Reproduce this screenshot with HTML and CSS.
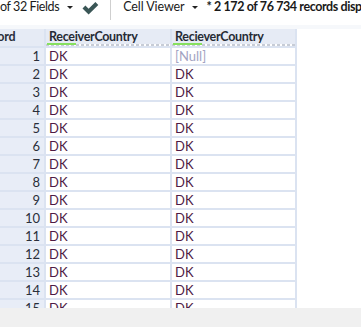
FILE: index.html
```html
<!DOCTYPE html>
<html lang="en">
<head>
    <meta charset="UTF-8">
    <title>Results</title>
    <link rel="stylesheet" href="styles.css">
</head>
<body>
    <div class="toolbar">
        <span class="tb-text fields">of 32 Fields</span>
        <span class="caret"></span>
        <svg class="check" width="17" height="14" viewBox="0 0 17 14">
            <path d="M0.5 7.5 L3.4 4.6 L6.6 7.8 L13.4 1 L16.3 3.9 L6.6 13.6 Z" fill="#3a5656"/>
        </svg>
        <span class="sep"></span>
        <span class="tb-text viewer">Cell Viewer</span>
        <span class="caret"></span>
        <span class="tb-text count">* 2 172 of 76 734 records displayed</span>
    </div>
    <div class="strip"></div>
    <div class="grid">
        <div class="row head">
            <div class="num"><span class="cut">Record</span></div>
            <div class="cell"><span>ReceiverCountry</span></div>
            <div class="cell"><span>RecieverCountry</span></div>
        </div>
    </div>
    <div class="footer"></div>
    <script>
        var grid = document.querySelector(".grid");
        for (var i = 1; i <= 15; i++) {
            var row = document.createElement("div");
            row.className = "row";
            var second = i == 1 ? '<div class="cell null">[Null]</div>' : '<div class="cell">DK</div>';
            row.innerHTML = '<div class="num">' + i + '</div><div class="cell">DK</div>' + second;
            grid.appendChild(row);
        }
    </script>
</body>
</html>
```

FILE: styles.css
```css
body {
    margin: 0;
    width: 361px;
    height: 327px;
    overflow: hidden;
    background: #ffffff;
    font-family: Lato, "Open Sans", sans-serif;
    position: relative;
}
.toolbar {
    height: 25px;
    display: flex;
    align-items: flex-start;
    white-space: nowrap;
    font-size: 12.5px;
    letter-spacing: -0.4px;
    color: #1a1a1a;
    overflow: hidden;
}
.toolbar > * {
    flex-shrink: 0;
}
.tb-text {
    line-height: 16px;
    margin-top: -1px;
}
.viewer {
    letter-spacing: -0.1px;
}
.count {
    font-weight: bold;
    margin-left: 8px;
}
.caret {
    width: 0;
    height: 0;
    border-left: 3px solid transparent;
    border-right: 3px solid transparent;
    border-top: 3px solid #222;
    margin-top: 6px;
    margin-left: 8px;
}
.check {
    margin-left: 9px;
    margin-top: 1px;
}
.sep {
    width: 1px;
    height: 20px;
    background: #cfcfcf;
    margin-left: 11px;
    margin-right: 12px;
}
.strip {
    height: 4px;
    background: #f6f8fb;
}
.grid {
    width: 297px;
    background: #dbe3f1;
    height: 279px;
    overflow: hidden;
}
.row {
    display: flex;
    gap: 2px;
    height: 16px;
    margin-bottom: 2px;
    font-size: 13px;
    line-height: 16px;
}
.num {
    width: 40px;
    padding-right: 4px;
    background: #e8edf7;
    text-align: right;
    color: #2a2f3a;
    overflow: hidden;
    white-space: nowrap;
}
.cell {
    width: 121px;
    padding-left: 3px;
    background: #ffffff;
    color: #4e1a45;
}
.row .cell:last-child {
    width: 120px;
}
.null {
    color: #a3a3c2;
}
.head {
    height: 17px;
    margin-bottom: 2px;
    font-size: 12.5px;
    letter-spacing: -0.3px;
    font-weight: bold;
    color: #262b35;
}
.head .num {
    background: #e6ebf5;
    text-align: left;
    padding-right: 0;
    width: 44px;
}
.head .cut {
    margin-left: -22px;
}
.head .cell {
    background-color: #e6ebf5;
    color: #262b35;
    position: relative;
    line-height: 15px;
}
.head .cell::after {
    content: "";
    position: absolute;
    left: 0;
    right: 0;
    bottom: 0;
    height: 2px;
    background: repeating-linear-gradient(90deg, #c7ccd6 0 3px, #ffffff 3px 5px);
}
.head .cell::before {
    content: "";
    position: absolute;
    left: 1px;
    bottom: 1px;
    width: 29px;
    height: 2px;
    background: #86e05f;
    z-index: 1;
}
.footer {
    position: absolute;
    left: 0;
    right: 0;
    top: 308px;
    bottom: 0;
    background: #f0f0f0;
}
```
